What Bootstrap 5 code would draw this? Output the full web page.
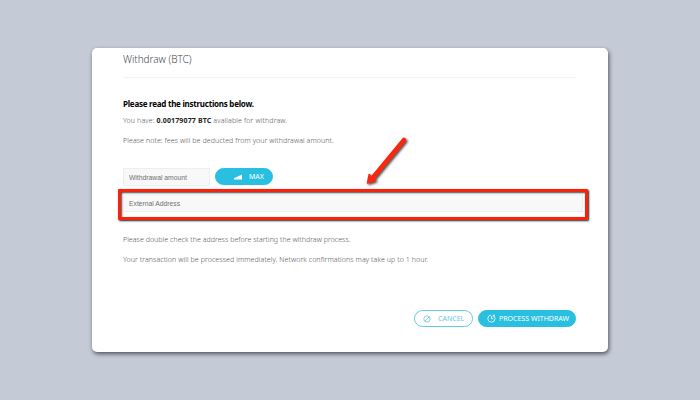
<!DOCTYPE html>
<html lang="en">
<head>
<meta charset="utf-8">
<meta name="viewport" content="width=device-width, initial-scale=1">
<title>Withdraw (BTC)</title>
<link href="https://cdn.jsdelivr.net/npm/bootstrap@5.3.0/dist/css/bootstrap.min.css" rel="stylesheet">
<style>
body{background:#c5cbd6;height:400px;overflow:hidden;font-family:"Noto Sans","Open Sans",sans-serif;font-size:7px;line-height:10px;color:#555}
.dialog{width:516px;height:304px;margin-top:48px;border:0;border-radius:5px;box-shadow:1px 2px 4px rgba(40,45,55,.75)}
.dialog-body{margin:0 32px 0 31px}
.dialog-title{height:30px;padding-top:4px;border-bottom:1px solid #f3f3f3;font-size:10px;line-height:15px;font-weight:300;color:#40484e}
.dialog-title span{letter-spacing:-.03px}
.intro{margin-top:20px;font-size:8px;font-weight:700;line-height:11px;color:#000;letter-spacing:-.25px}
.copy{font-weight:300;white-space:nowrap;letter-spacing:.09px}
.copy strong{color:#222;font-weight:700}
.balance{margin-top:7px;letter-spacing:.14px}
.fees,.timing{margin-top:10px}
.check{margin-top:15px;letter-spacing:.05px}
.field{background:#f8f8f8;border:1px solid #eee;border-radius:0;padding:0 5px;height:18px;font:6.75px/16px "Liberation Sans",sans-serif;color:#555}
.field::placeholder{color:#707070;opacity:1}
.field-amount{width:87px}
.amount-row{margin-top:22px;gap:5px}
.mark-box{margin:3px -11.500px 0 -5px;height:31px;border:3px solid #f8220b;border-radius:1px;padding:2px 2px 0;box-shadow:1px 1px 2px #222,inset 1px 1px 2px #444}
.pill{height:17px;padding:0;border-radius:9px;font-size:7px;line-height:15px;border:1px solid #29bfe0}
.pill-fill,.pill-fill:hover{background:#29bfe0;color:#fff}
.pill-line,.pill-line:hover{background:#fff;color:#65c9e0;border-color:#65c9e0}
.max-btn{width:58px;padding-left:18px;gap:7px}
.actions{margin-top:45px;gap:5px}
.cancel-btn{width:59px;padding-left:8px;gap:7px}
.process-btn{width:98px;padding-left:8px;gap:3px;white-space:nowrap}
.pointer{left:264px;top:82px}
</style>
</head>
<body>
<main class="dialog card mx-auto position-relative">
  <div class="dialog-body d-flex flex-column">
    <h1 class="dialog-title mb-0"><span>Withdraw (BTC)</span></h1>
    <p class="intro mb-0">Please read the instructions below.</p>
    <p class="copy balance mb-0">You have: <strong>0.00179077 BTC</strong> available for withdraw.</p>
    <p class="copy fees mb-0">Please note: fees will be deducted from your withdrawal amount.</p>
    <div class="d-flex amount-row">
      <input class="form-control field field-amount" placeholder="Withdrawal amount" aria-label="Withdrawal amount">
      <button class="btn pill pill-fill d-flex align-items-center max-btn"><svg width="8" height="6" viewBox="0 0 8 6"><path d="M0 5.500V4.300L8 .4v5.100z" fill="#fff"/></svg><span>MAX</span></button>
    </div>
    <div class="mark-box"><input class="form-control field w-100" placeholder="External Address" aria-label="External Address"></div>
    <p class="copy check mb-0">Please double check the address before starting the withdraw process.</p>
    <p class="copy timing mb-0">Your transaction will be processed immediately. Network confirmations may take up to 1 hour.</p>
    <div class="d-flex justify-content-end actions">
      <button class="btn pill pill-line d-flex align-items-center cancel-btn"><svg width="8" height="8" viewBox="0 0 8 8" fill="none" stroke="currentColor" stroke-width=".8"><circle cx="4" cy="4" r="3.200"/><path d="M1.800 6.200L6.200 1.800"/></svg><span>CANCEL</span></button>
      <button class="btn pill pill-fill d-flex align-items-center process-btn"><svg width="9" height="9" viewBox="0 0 9 9" fill="none" stroke="currentColor" stroke-width=".8"><path d="M4 1A3.600 3.600 0 1 0 8 4.500Q8 2.700 6.500 1.600M4.500 2.200v2.500h1.700M8 1.200H6.200v1.900"/></svg><span>PROCESS WITHDRAW</span></button>
    </div>
  </div>
  <svg class="pointer position-absolute" width="60" height="60" viewBox="356 130 60 60"><defs><filter id="s" x="-20%" y="-20%" width="150%" height="150%"><feDropShadow dx="1.300" dy="1.300" stdDeviation=".8" flood-color="#222" flood-opacity=".85"/></filter></defs><g filter="url(#s)" fill="#fa280c" stroke="#fa280c" stroke-linejoin="round" stroke-linecap="round"><path d="M404 140L373 177.500" stroke-width="4.500"/><path d="M367.500 183L369.200 174.500L375.500 180.500Z" stroke-width="1.500"/></g></svg>
</main>
<script src="https://cdn.jsdelivr.net/npm/bootstrap@5.3.0/dist/js/bootstrap.bundle.min.js"></script>
</body>
</html>
